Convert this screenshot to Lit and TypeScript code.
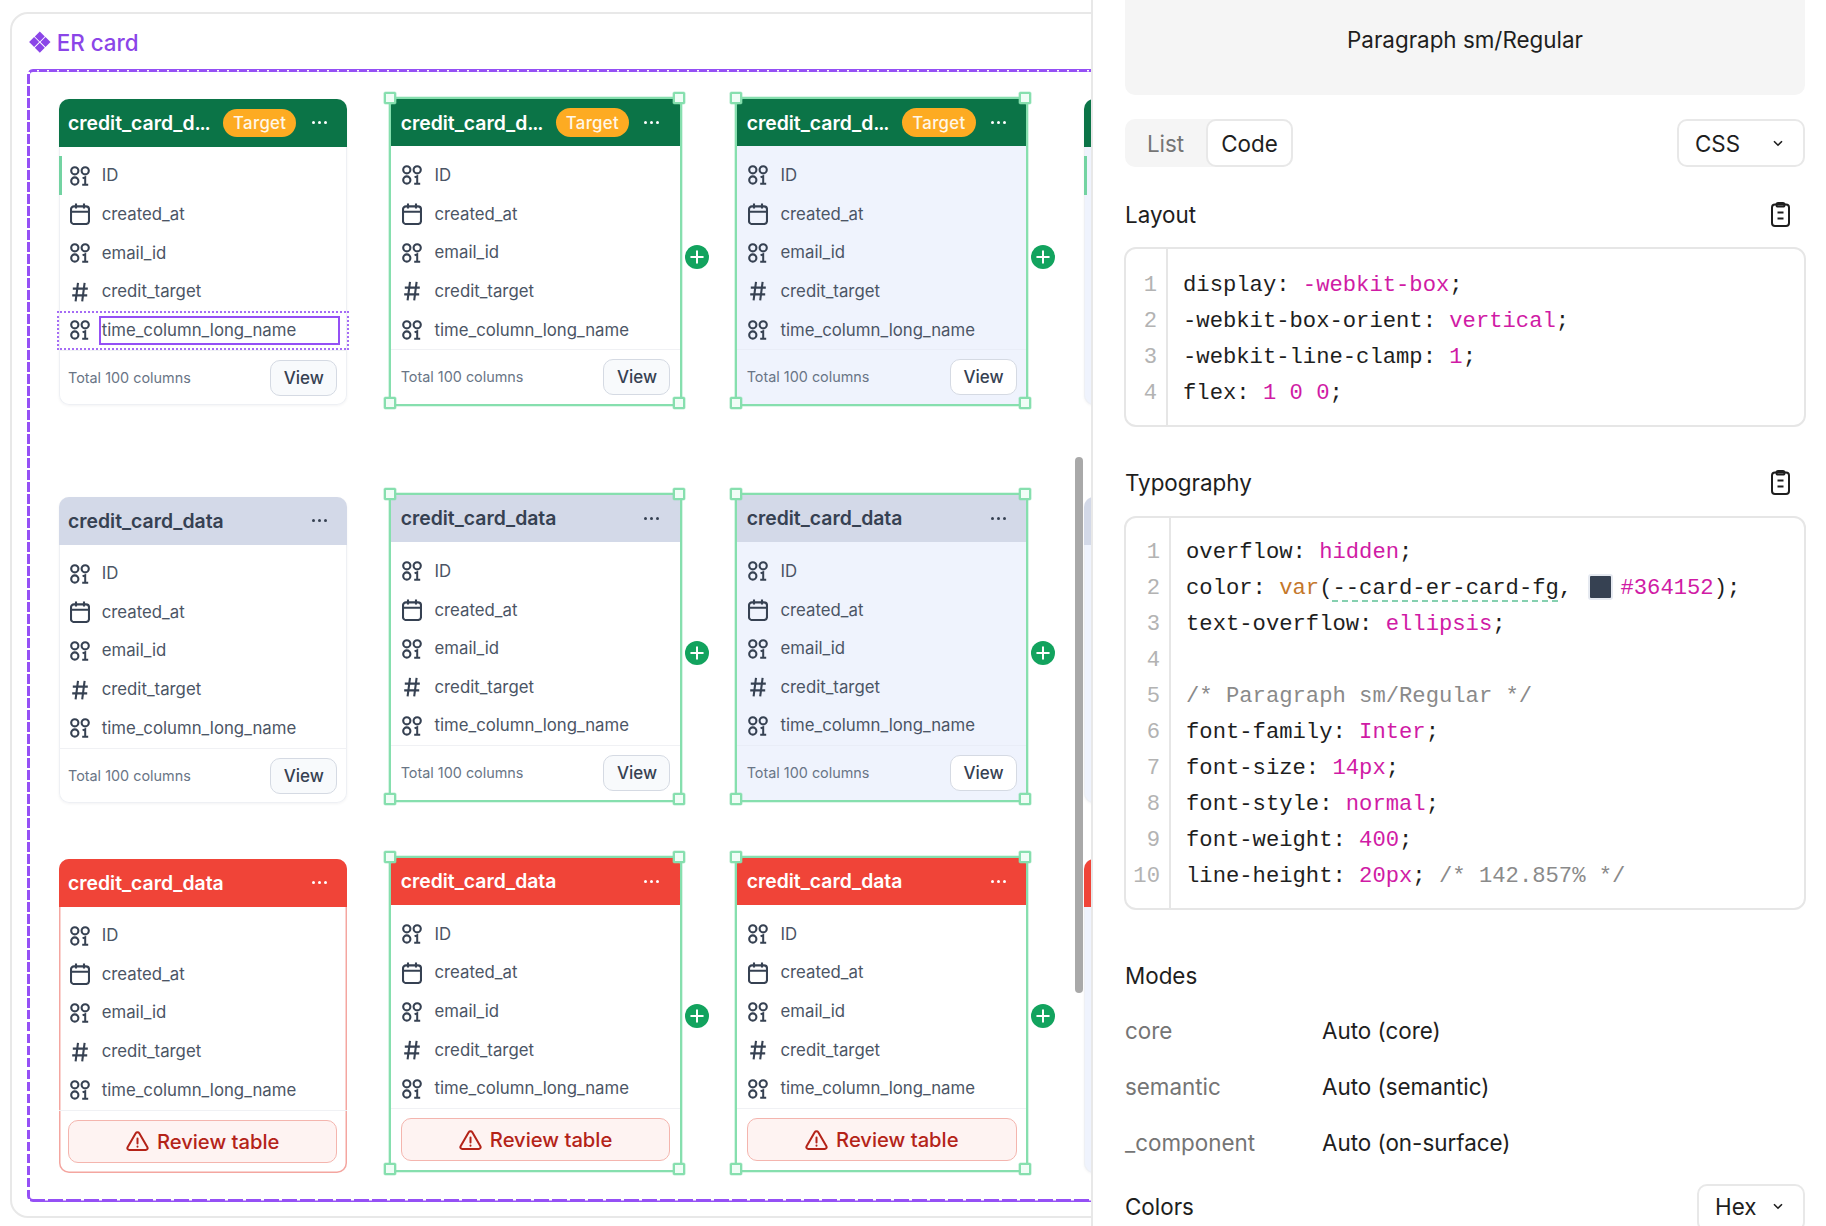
import { LitElement, html, css, svg } from "lit";
import { customElement } from "lit/decorators.js";

const binIcon = html`<svg class="ico" width="20" height="20" viewBox="0 0 20 20" fill="none" stroke="currentColor" stroke-width="2.1"><circle cx="4.8" cy="4.8" r="3.6"/><circle cx="15.2" cy="4.8" r="3.6"/><circle cx="4.8" cy="15" r="3.6"/><path d="M12.6 12.4l2.6-1.2v7.6M12.2 18.8h6" stroke-width="2"/></svg>`;
const calIcon = html`<svg class="ico" width="20" height="22" viewBox="0 0 20 22" fill="none" stroke="currentColor" stroke-width="2.1"><rect x="1" y="3.4" width="18" height="17.6" rx="3"/><path d="M1 8.8h18M6 .4v5M14 .4v5"/></svg>`;
const hashIcon = html`<svg class="ico" width="20" height="20" viewBox="0 0 20 20" fill="none" stroke="currentColor" stroke-width="2.1"><path d="M8 .8L5.6 19.4M14.6 .8L12.2 19.4M2.8 6.6h15M2.2 13.4h15"/></svg>`;
const warnIcon = html`<svg width="23" height="20" viewBox="0 0 23 20" fill="none" stroke="currentColor" stroke-width="2" stroke-linejoin="round" stroke-linecap="round"><path d="M9.7 2.2L1.6 16.2c-.7 1.3.2 2.8 1.7 2.8h16.4c1.5 0 2.4-1.5 1.7-2.8L13.3 2.2c-.8-1.3-2.8-1.3-3.6 0z"/><path d="M11.5 7.4v5M11.5 15.6v.1"/></svg>`;
const clipIcon = html`<svg width="19" height="25" viewBox="0 0 19 25" fill="none" stroke="#1e1e1e" stroke-width="2"><rect x="1" y="2.6" width="17" height="21.4" rx="3"/><rect x="5.5" y="1" width="8" height="3.6" rx="1.6"/><path d="M6.5 10.4h6M6.5 16.6h6"/></svg>`;
const chevron = html`<svg class="chev" width="10" height="7" viewBox="0 0 10 7" fill="none" stroke="#1e1e1e" stroke-width="1.6"><path d="M1 1.2l4 4 4-4"/></svg>`;
const plusIcon = html`<svg width="14" height="14" viewBox="0 0 14 14" stroke="#fff" stroke-width="2" stroke-linecap="round"><path d="M7 1.2v11.6M1.2 7h11.6"/></svg>`;
const logo = svg`<path d="M10.8 .4l5 5-5 5-5-5zM5.1 6.1l5 5-5 5-5-5zM16.5 6.1l5 5-5 5-5-5zM10.8 11.8l5 5-5 5-5-5z" fill="#8b45e8"/>`;

type Kind = "green" | "grey" | "red";
interface CardOpts {
  kind: Kind;
  sel?: boolean;
  blue?: boolean;
  accent?: boolean;
  focus?: boolean;
  row: number;
}

const rows: [unknown, string][] = [
  [binIcon, "ID"],
  [calIcon, "created_at"],
  [binIcon, "email_id"],
  [hashIcon, "credit_target"],
  [binIcon, "time_column_long_name"],
];

function card(o: CardOpts) {
  const cls = ["card", o.kind, `r${o.row}`, o.sel ? "sel" : "", o.blue ? "blue" : ""].join(" ");
  const target = o.kind === "green";
  return html`<div class=${cls}>
    <div class="head">
      <span class="title">${target ? html`credit_card_d<span class="ell">...</span>` : "credit_card_data"}</span>
      ${target ? html`<span class="pill">Target</span>` : ""}
      <span class="dots"><i></i><i></i><i></i></span>
    </div>
    <div class="list">
      ${rows.map(
        ([ic, name], i) => html`<div class="row ${o.accent && i === 0 ? "accent" : ""} ${o.focus && i === 4 ? "focus" : ""}">
          <span class="icbox">${ic}</span><span class="name">${name}</span>
        </div>`
      )}
    </div>
    ${o.kind === "red"
      ? html`<div class="foot rev"><div class="review">${warnIcon}<span>Review table</span></div></div>`
      : html`<div class="foot"><span class="total">Total 100 columns</span><span class="view">View</span></div>`}
    ${o.sel
      ? html`<b class="h tl"></b><b class="h tr"></b><b class="h bl"></b><b class="h br"></b><span class="plus">${plusIcon}</span>`
      : ""}
  </div>`;
}

/* The fourth column is cut by the panel edge: only its left sliver is on screen. */
function stub(o: CardOpts) {
  return html`<div class="card stub ${o.kind} r${o.row} blue">
    <div class="head"></div>
    <div class="list"><div class="row ${o.accent ? "accent" : ""}"></div></div>
  </div>`;
}

const k = (s: string) => html`<span class="k">${s}</span>`;
const c = (s: string) => html`<span class="c">${s}</span>`;

const layoutLines = [
  html`display: ${k("-webkit-box")};`,
  html`-webkit-box-orient: ${k("vertical")};`,
  html`-webkit-line-clamp: ${k("1")};`,
  html`flex: ${k("1 0 0")};`,
];
const typoLines = [
  html`overflow: ${k("hidden")};`,
  html`color: <span class="fn">var</span>(<span class="ul">--card-er-card-fg</span>, <span class="sw"></span>${k("#364152")});`,
  html`text-overflow: ${k("ellipsis")};`,
  html` `,
  c("/* Paragraph sm/Regular */"),
  html`font-family: ${k("Inter")};`,
  html`font-size: ${k("14px")};`,
  html`font-style: ${k("normal")};`,
  html`font-weight: ${k("400")};`,
  html`line-height: ${k("20px")}; ${c("/* 142.857% */")}`,
];

function code(lines: unknown[], cls: string) {
  return html`<div class="code ${cls}">
    <div class="gutter">${lines.map((_, i) => html`<div>${i + 1}</div>`)}</div>
    <div class="src">${lines.map((l) => html`<div>${l}</div>`)}</div>
  </div>`;
}

@customElement("app-root")
export class AppRoot extends LitElement {
  static styles = css`
    :host { display: flex; height: 1226px; width: 1826px; overflow: hidden; background: #fff; font-family: Inter, "Noto Sans", sans-serif; color: #1e1e1e; }
    .left { width: 1091px; flex: none; overflow: hidden; padding: 12px 0 0 10px; box-sizing: border-box; }
    .frame { position: relative; width: 1200px; height: 1206px; box-sizing: border-box; border: 2px solid #e8e8e8; border-radius: 18px; padding: 0 0 0 14.7px; }
    .etitle { display: flex; align-items: center; gap: 6px; height: 54.5px; padding: 3px 0 0 2px; box-sizing: border-box; color: #8b45e8; font-size: 22.4px; font-weight: 500; }
    .canvas { position: relative; height: 1133.5px; box-sizing: border-box; border: 3px solid #9550f5; border-radius: 6px; display: flex; align-items: flex-start; padding-left: 29.6px; }
    .canvas::after { content: ""; position: absolute; inset: -3px; pointer-events: none;
      background:
        repeating-linear-gradient(90deg, #fff 0 2.5px, transparent 2.5px 10px) 0 1.5px / 100% 1.5px no-repeat,
        repeating-linear-gradient(90deg, #fff 0 3px, transparent 3px 18px) 0 calc(100% - 1.5px) / 100% 1.5px no-repeat,
        repeating-linear-gradient(0deg, #fff 0 2.5px, transparent 2.5px 12px) 0 0 / 3px 100% no-repeat; }
    .col { display: flex; flex-direction: column; flex: none; }
    .c1 { width: 287.4px; padding-top: 27.5px; }
    .c2 { width: 292.5px; margin-left: 42.8px; padding-top: 25.2px; }
    .c3 { width: 293px; margin-left: 53.5px; padding-top: 25.2px; }
    .c4 { width: 288px; margin-left: 55.5px; padding-top: 27.5px; }
    .c1 .r2, .c4 .r2 { margin-top: 92.3px; }
    .c1 .r3, .c4 .r3 { margin-top: 56.3px; }
    .c2 .r2, .c3 .r2 { margin-top: 86.3px; }
    .c2 .r3, .c3 .r3 { margin-top: 53.3px; }
    .stub { height: 305.7px; }
    .stub.red { height: 313.7px; }
    .scroll { position: absolute; left: 1063px; top: 443px; width: 8px; height: 536px; border-radius: 4px; background: #a9a9a9; z-index: 3; }

    .card { position: relative; --pl: 8.7px; --il: 10.4px; --pr: 9.4px; --dr: 19.9px; background: #fff; border-radius: 10px; box-shadow: inset 0 0 0 1px #eef0f4, 0 1px 3px rgba(16,24,40,.05); }
    .card.blue { background: #eff3fd; }
    .card.red:not(.sel):not(.stub) { box-shadow: inset 0 0 0 1.5px #f4a6a0; }
    .card.sel { --pl: 9.2px; --il: 11px; --pr: 9.5px; --dr: 20.5px; border: 2px solid #86dfae; border-radius: 2px; box-shadow: 0 0 0 .6px rgba(134,223,174,.55); }
    .head { height: 47.7px; box-sizing: border-box; display: flex; align-items: center; padding: 0 var(--dr) 0 var(--pl); border-radius: 10px 10px 0 0; font-size: 19.4px; font-weight: 600; }
    .sel .head { border-radius: 6px 6px 0 0; }
    .green .head { background: #0b7447; color: #fff; }
    .grey .head { background: #d3d9e8; color: #364152; }
    .red .head { background: #f04438; color: #fff; }
    .title { white-space: nowrap; }
    .ell { letter-spacing: -1.2px; }
    .pill { margin-left: auto; margin-right: 15.4px; width: 73.4px; height: 28.7px; border-radius: 15px; background: #fdab22; color: #fff7e8; font-size: 16.8px; font-weight: 500; letter-spacing: .3px; display: flex; align-items: center; justify-content: center; }
    .dots { margin-left: auto; display: flex; gap: 3px; width: 15px; }
    .pill + .dots { margin-left: 0; }
    .dots i { width: 3px; height: 3px; border-radius: 50%; background: currentColor; }
    .list { padding-top: 9.7px; }
    .row { position: relative; height: 38.67px; display: flex; align-items: center; padding-left: var(--il); color: #4b5565; font-size: 16.8px; }
    .name { position: relative; top: -.5px; }
    .icbox { width: 20px; height: 22px; display: flex; align-items: center; justify-content: center; color: #364152; margin-right: 12px; flex: none; }
    .ico { display: block; }
    .accent::before { content: ""; position: absolute; left: 0; top: 0; bottom: 0; width: 2.6px; background: #73d3a2; }
    .focus::before { content: ""; position: absolute; left: -2px; right: -2px; top: 0; bottom: 0; border: 2px dotted #a56cf5; }
    .focus .name { outline: 2px solid #9550f5; outline-offset: 0; width: 237px; height: 25px; margin-left: -1px; padding-left: 1px; line-height: 25px; box-sizing: border-box; top: 0; }
    .foot { box-sizing: border-box; height: 55px; border-top: 1px solid #f0f1f4; padding: 9px var(--pr) 9px var(--pl); display: flex; align-items: center; justify-content: space-between; }
    .blue .foot { border-top-color: #e9edf7; }
    .total { font-size: 14.4px; color: #697586; position: relative; top: -.5px; }
    .view { width: 67px; height: 36px; box-sizing: border-box; border: 1.5px solid #d5dae3; border-radius: 10px; background: #f8fafc; color: #364152; font-size: 17px; font-weight: 500; display: flex; align-items: center; justify-content: center; }
    .blue .view { background: #fff; }
    .foot.rev { height: 62px; }
    .c1 .foot.rev { height: 63px; padding-bottom: 10px; }
    .review { flex: 1; height: 43px; box-sizing: border-box; border: 1.5px solid #f4b5ae; border-radius: 10px; background: #fef3f2; color: #b42318; font-size: 20.2px; font-weight: 500; display: flex; align-items: center; justify-content: center; gap: 8px; }
    .h { position: absolute; width: 12px; height: 12px; box-sizing: border-box; border: 2px solid #86dfae; background: #f0fdf6; z-index: 2; border-radius: 1.5px; box-shadow: 0 0 0 .6px rgba(134,223,174,.55); }
    .tl { left: -7px; top: -6.5px; }
    .tr { right: -5px; top: -6.5px; }
    .bl { left: -7px; bottom: -5px; }
    .br { right: -5px; bottom: -5px; }
    .plus { position: absolute; right: -29px; top: 146px; width: 24px; height: 24px; border-radius: 50%; background: #12a35e; display: flex; align-items: center; justify-content: center; }

    .right { flex: 1; border-left: 2px solid #e8e8e8; padding-left: 32px; box-sizing: border-box; font-size: 22.4px; }
    .inner { width: 680px; }
    .banner { height: 95px; box-sizing: border-box; padding-bottom: 17px; background: #f5f5f5; border-radius: 0 0 10px 10px; display: flex; align-items: center; justify-content: center; }
    .tools { display: flex; justify-content: space-between; margin-top: 24px; height: 48px; }
    .tabs { display: flex; background: #f5f5f5; border-radius: 10px; }
    .tab { width: 81px; display: flex; align-items: center; justify-content: center; color: #757575; }
    .tab.on { width: 87px; box-sizing: border-box; background: #fff; color: #1e1e1e; border: 2px solid #e8e8e8; border-radius: 10px; }
    .sel-box { box-sizing: border-box; height: 48px; border: 2px solid #e8e8e8; border-radius: 10px; display: flex; align-items: center; justify-content: space-between; padding: 0 20px 0 16px; }
    .sel-box.css { width: 128px; }
    .sel-box.hex { width: 108px; padding-bottom: 4px; }
    .sect { display: flex; justify-content: space-between; align-items: center; height: 36px; padding-right: 15px; padding-bottom: 3px; box-sizing: border-box; }
    .s1 { margin-top: 31px; margin-bottom: 13px; }
    .s2 { margin-top: 39px; margin-bottom: 14px; }
    .code { display: flex; margin-left: -1px; width: 682px; box-sizing: border-box; border: 2px solid #e6e6e6; border-radius: 12px; font-family: "Liberation Mono", monospace; font-size: 22.2px; line-height: 36px; }
    .gutter { flex: none; box-sizing: border-box; border-right: 2px solid #e6e6e6; text-align: right; color: #b3b3b3; padding: 19px 9px 13px 0; width: 42px; }
    .src { padding: 19px 0 13px 15px; white-space: pre; color: #1e1e1e; }
    .typo .gutter { width: 45px; padding-top: 17px; padding-bottom: 13px; }
    .typo .src { padding-top: 17px; padding-bottom: 13px; }
    .k { color: #d01ba5; }
    .c { color: #8a8a8a; }
    .fn { color: #c4772b; }
    .ul { text-decoration: underline dashed #86d0b0 2px; text-underline-offset: 6px; }
    .sw { display: inline-block; width: 25px; height: 26px; box-sizing: border-box; background: #364152; border: 2px solid #e6eaf1; border-radius: 3px; margin: 0 7px 0 3px; vertical-align: -6px; }
    .modes { margin-top: 47px; }
    .mhead { height: 36px; box-sizing: border-box; display: flex; align-items: center; margin-bottom: 11px; }
    .mrow { height: 56px; box-sizing: border-box; padding-bottom: 4px; display: flex; align-items: center; }
    .mrow span:first-child { width: 197px; color: #757575; }
    .colors { display: flex; justify-content: space-between; align-items: center; margin-top: 12px; }
    .colors > span { position: relative; top: -2px; }
  `;

  render() {
    return html`
      <div class="left">
        <div class="frame">
          <div class="etitle"><svg width="22" height="23" viewBox="0 0 22 23">${logo}</svg><span>ER card</span></div>
          <div class="canvas">
            <div class="col c1">
              ${card({ kind: "green", row: 1, accent: true, focus: true })}
              ${card({ kind: "grey", row: 2 })}
              ${card({ kind: "red", row: 3 })}
            </div>
            <div class="col c2">
              ${card({ kind: "green", row: 1, sel: true })}
              ${card({ kind: "grey", row: 2, sel: true })}
              ${card({ kind: "red", row: 3, sel: true })}
            </div>
            <div class="col c3">
              ${card({ kind: "green", row: 1, sel: true, blue: true })}
              ${card({ kind: "grey", row: 2, sel: true, blue: true })}
              ${card({ kind: "red", row: 3, sel: true })}
            </div>
            <div class="col c4">
              ${stub({ kind: "green", row: 1, accent: true })}
              ${stub({ kind: "grey", row: 2 })}
              ${stub({ kind: "red", row: 3 })}
            </div>
          </div>
          <div class="scroll"></div>
        </div>
      </div>
      <div class="right">
        <div class="inner">
          <div class="banner">Paragraph sm/Regular</div>
          <div class="tools">
            <div class="tabs"><div class="tab">List</div><div class="tab on">Code</div></div>
            <div class="sel-box css"><span>CSS</span>${chevron}</div>
          </div>
          <div class="sect s1"><span>Layout</span>${clipIcon}</div>
          ${code(layoutLines, "lay")}
          <div class="sect s2"><span>Typography</span>${clipIcon}</div>
          ${code(typoLines, "typo")}
          <div class="modes">
            <div class="mhead">Modes</div>
            <div class="mrow"><span>core</span><span>Auto (core)</span></div>
            <div class="mrow"><span>semantic</span><span>Auto (semantic)</span></div>
            <div class="mrow"><span>_component</span><span>Auto (on-surface)</span></div>
          </div>
          <div class="colors"><span>Colors</span><div class="sel-box hex"><span>Hex</span>${chevron}</div></div>
        </div>
      </div>
    `;
  }
}
